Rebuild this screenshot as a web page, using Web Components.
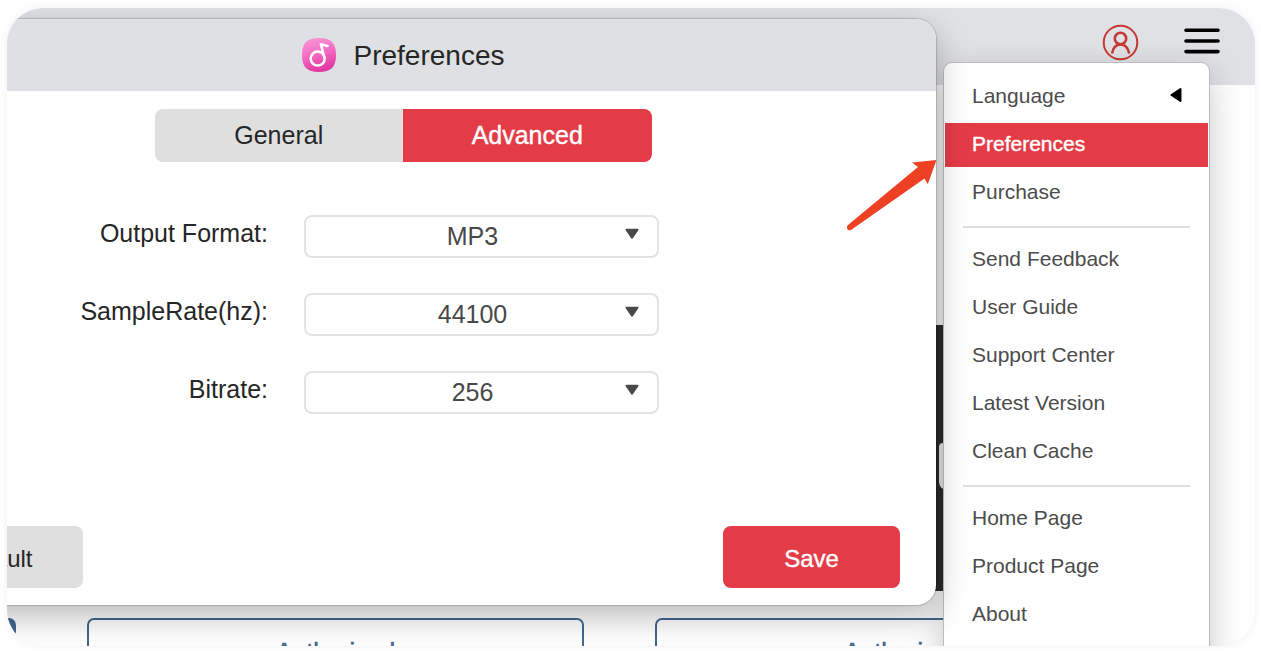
<!DOCTYPE html>
<html lang="en">
<head>
<meta charset="utf-8">
<title>Preferences</title>
<style>
  html, body { margin: 0; height: 100%; }
  body {
    background: #fff;
    font-family: "Liberation Sans", Arial, Helvetica, sans-serif;
    overflow: hidden;
  }
</style>
</head>
<body>
<app-window>
  <app-toolbar slot="toolbar"></app-toolbar>
  <app-gallery></app-gallery>
  <app-menu slot="overlay">
    <menu-item arrow>Language</menu-item>
    <menu-item selected>Preferences</menu-item>
    <menu-item>Purchase</menu-item>
    <menu-rule></menu-rule>
    <menu-item>Send Feedback</menu-item>
    <menu-item>User Guide</menu-item>
    <menu-item>Support Center</menu-item>
    <menu-item>Latest Version</menu-item>
    <menu-item>Clean Cache</menu-item>
    <menu-rule></menu-rule>
    <menu-item>Home Page</menu-item>
    <menu-item>Product Page</menu-item>
    <menu-item>About</menu-item>
  </app-menu>
  <prefs-dialog slot="overlay">
    <pref-field label="Output Format:" value="MP3"></pref-field>
    <pref-field label="SampleRate(hz):" value="44100"></pref-field>
    <pref-field label="Bitrate:" value="256"></pref-field>
  </prefs-dialog>
  <pointer-arrow slot="overlay"></pointer-arrow>
</app-window>

<script>
function define(name, html, setup) {
  const template = document.createElement('template');
  template.innerHTML = html;
  customElements.define(name, class extends HTMLElement {
    constructor() {
      super();
      this.attachShadow({ mode: 'open' }).append(template.content.cloneNode(true));
    }
    connectedCallback() { if (setup) setup(this, this.shadowRoot); }
  });
}

/* Rounded window that clips everything inside it */
define('app-window', `
<style>
  :host { display: block; box-sizing: border-box; height: 100vh; padding: 8px 6px 5px 7px; }
  .frame {
    position: relative; height: 100%; overflow: hidden; border-radius: 36px;
    background: #fff; box-shadow: 0 0 9px rgba(40, 60, 130, .07);
  }
</style>
<div class="frame">
  <slot name="toolbar"></slot>
  <main><slot></slot></main>
  <slot name="overlay"></slot>
</div>`);

define('app-toolbar', `
<style>
  :host {
    display: flex; justify-content: flex-end; align-items: center; gap: 45px;
    box-sizing: border-box; height: 77px; padding: 0 35px 8px 0; background: #e0e1e4;
  }
  button { padding: 0; border: 0; background: none; display: block; }
  svg { display: block; }
</style>
<button aria-label="Account">
  <svg width="37" height="37" viewBox="0 0 37 37" fill="none" stroke="#c53a34">
    <circle cx="18.500" cy="18.500" r="16.800" stroke-width="2"/>
    <circle cx="18.500" cy="14.500" r="5.700" stroke-width="2.600"/>
    <path d="M10.300 28.500C11.300 23.200 14.300 20.500 18.500 20.500S25.700 23.200 26.900 28.500" stroke-width="2.600" stroke-linecap="round"/>
  </svg>
</button>
<button aria-label="Menu">
  <svg width="36" height="37" viewBox="0 0 36 37" stroke="#000" stroke-width="3.600" stroke-linecap="round">
    <path d="M2 6.300H34M2 17H34M2 27.600H34"/>
  </svg>
</button>`);

/* Page content behind the dialog: three equal columns, scrolled sideways */
define('app-gallery', `
<style>
  :host {
    display: grid; grid-template-columns: repeat(3, 1fr); column-gap: 71px; row-gap: 27px;
    grid-template-rows: 266px 64px; margin: 240px 103px 0 -488px;
  }
  .thumb { grid-column: 3; background: #2e2e2e; display: flex; align-items: center; justify-content: flex-end; }
  .badge { width: 213px; height: 47px; margin-top: 16px; background: #f4f4f4; border-radius: 4px 4px 8px 8px; }
  button {
    box-sizing: border-box; border: 2px solid #42698f; border-radius: 7px; background: none;
    color: #42698f; font: 25px/29px "Liberation Sans", Arial, sans-serif; padding: 4px 0 0;
    -webkit-text-stroke: .6px #42698f;
  }
  .filled { background: #42698f; }
</style>
<div class="thumb"><div class="badge"></div></div>
<button class="filled" aria-label="Play"></button>
<button>Authorized</button>
<button>Authorized</button>`);

define('app-menu', `
<style>
  :host {
    position: absolute; top: 54px; right: 45px; width: 267px; box-sizing: border-box;
    padding: 12px 1px 60px; border: 1px solid #bcbcbe; border-radius: 9px; background: #fff;
    box-shadow: 0 12px 34px rgba(0, 0, 0, .22);
  }
  nav { display: flex; flex-direction: column; gap: 4px; }
</style>
<nav><slot></slot></nav>`);

define('menu-item', `
<style>
  :host { display: block; color: #4c4c4c; }
  :host([selected]) { background: #e43c47; color: #fff; -webkit-text-stroke: .4px #fff; }
  a {
    display: flex; align-items: center; justify-content: space-between; box-sizing: border-box;
    height: 44px; padding: 0 26px 2px 27px; color: inherit; text-decoration: none; font-size: 21px; line-height: 24px;
  }
  svg { display: none; margin-bottom: 2px; }
  :host([arrow]) svg { display: block; }
</style>
<a href="#"><slot></slot><svg width="12" height="16" viewBox="0 0 12 16"><path d="M10.500 2V14L1.500 8Z" stroke="#000" stroke-width="2" stroke-linejoin="round"/></svg></a>`);

define('menu-rule', `
<style>
  :host { display: block; margin: 7px 18px 6px 18px; height: 2px; background: #e0e0e0; }
</style>`);

define('prefs-dialog', `
<style>
  :host {
    position: absolute; top: 11px; left: -137px; right: 319px; box-sizing: border-box;
    border-radius: 20px; background: #fff;
    box-shadow: 0 0 1px 1px rgba(0, 0, 0, .16), 0 12px 32px rgba(0, 0, 0, .27);
  }
  header {
    display: flex; align-items: center; justify-content: center; gap: 18px; height: 72px;
    border-radius: 20px 20px 0 0; background: #dfe0e4; color: #262626;
  }
  h1 { margin: 0; padding-top: 2px; font-size: 28px; line-height: 32px; font-weight: 400; }
  .tabs { display: grid; grid-template-columns: 1fr 1fr; width: 497px; margin: 18px auto 0; border-radius: 8px; overflow: hidden; }
  button { border: 0; padding: 0; font: 25px/29px "Liberation Sans", Arial, sans-serif; color: #262626; background: #dfdfdf; }
  .tabs button { height: 53px; }
  button.on { background: #e43c47; color: #fff; -webkit-text-stroke: .4px #fff; }
  form { display: grid; gap: 35px; padding: 53px 0 112px; }
  footer { display: flex; justify-content: space-between; padding: 0 36px 17px; }
  footer button { width: 177px; height: 62px; padding-top: 2px; border-radius: 8px; font-size: 24px; }
</style>
<header>
  <svg width="34" height="34" viewBox="0 0 34 34" aria-hidden="true">
    <defs><linearGradient id="g" x1="0" y1="0" x2=".3" y2="1"><stop offset="0" stop-color="#fb9ad8"/><stop offset=".5" stop-color="#f471c4"/><stop offset="1" stop-color="#e33aa5"/></linearGradient></defs>
    <path d="M17 0C29 0 34 5 34 17S29 34 17 34 0 29 0 17 5 0 17 0Z" fill="url(#g)"/>
    <circle cx="15.700" cy="20.600" r="7" fill="none" stroke="#fff" stroke-width="2.500"/>
    <path d="M22.400 19.500L18.800 6.200L25.600 8" fill="none" stroke="#fff" stroke-width="2.500" stroke-linecap="round" stroke-linejoin="round"/>
  </svg>
  <h1>Preferences</h1>
</header>
<div class="tabs"><button>General</button><button class="on">Advanced</button></div>
<form><slot></slot></form>
<footer><button>Default</button><button class="on">Save</button></footer>`);

define('pref-field', `
<style>
  :host { display: grid; grid-template-columns: 398px 355px; column-gap: 36px; }
  label { text-align: right; font-size: 25px; line-height: 37px; color: #262626; }
  .box { display: grid; align-items: center; }
  select, svg { grid-area: 1 / 1; }
  select {
    appearance: none; box-sizing: border-box; width: 100%; height: 43px; padding: 0 18px 0 0;
    border: 2px solid #e3e3e3; border-radius: 8px; background: #fff; color: #484848;
    font: 25px/29px "Liberation Sans", Arial, sans-serif; text-align: center; text-align-last: center;
  }
  svg { justify-self: end; margin: 0 20px 5px 0; pointer-events: none; }
</style>
<label for="s"></label>
<div class="box">
  <select id="s"><option></option></select>
  <svg width="14" height="12" viewBox="0 0 14 12"><path d="M1.500 1.800H12.500L7 9.800Z" fill="#484848" stroke="#484848" stroke-width="2" stroke-linejoin="round"/></svg>
</div>`, (host, root) => {
  root.querySelector('label').textContent = host.getAttribute('label');
  root.querySelector('option').textContent = host.getAttribute('value');
});

/* Annotation arrow laid over the dialog, its tip on the menu's edge */
define('pointer-arrow', `
<style>
  :host { position: absolute; top: 151px; right: 318px; width: 92px; height: 73px; }
  svg { display: block; }
</style>
<svg width="92" height="73" viewBox="0 0 92 73" aria-hidden="true">
  <path d="M91.500 1L67 3.600L73 8L3 66C.5 68.600 3 72.600 6 71L79.500 19.500L82.800 25.200Z" fill="#ee4023"/>
</svg>`);
</script>
</body>
</html>
